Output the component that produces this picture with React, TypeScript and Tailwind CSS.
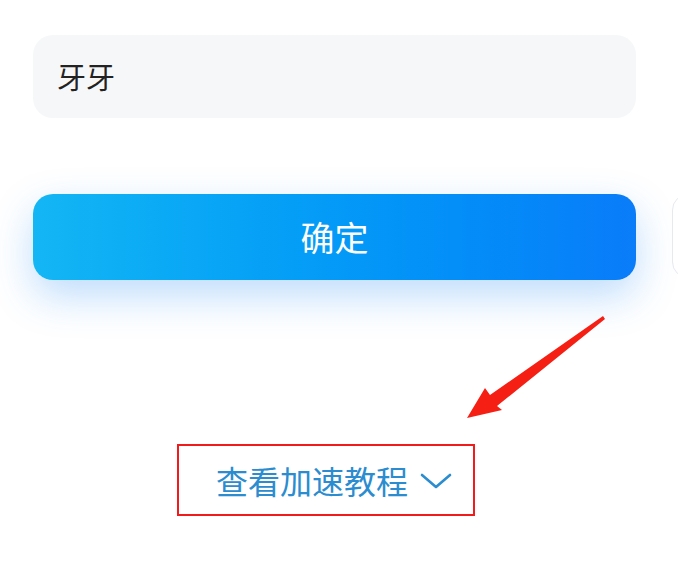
const cjk = { fontFamily: '"Noto Sans CJK SC", "Noto Sans", sans-serif' };

export default function App() {
  return (
    <div className="relative w-[678px] h-[570px] overflow-hidden bg-white" style={cjk}>
      <div className="pt-[35px] pl-[33px]">
        {/* nickname field */}
        <div className="w-[603px] h-[83px] rounded-[20px] bg-[#f6f7f9] flex items-center pl-[24px]">
          <span className="text-[29px] text-[#222] leading-none">牙牙</span>
        </div>

        {/* confirm row, next card peeks in from the right */}
        <div className="flex mt-[76px]">
          <button className="w-[603px] h-[86px] shrink-0 rounded-[20px] bg-gradient-to-r from-[#14b6f4] to-[#0a7cf9] shadow-[0_16px_40px_rgba(40,140,245,0.3)] text-white text-[34px] leading-none">
            确定
          </button>
          <div className="ml-[36px] w-[200px] h-[84px] shrink-0 rounded-[16px] border border-[#e6e9ee] bg-white" />
        </div>

        {/* tutorial link */}
        <div className="flex mt-[164px] ml-[144px]">
          <div className="w-[298px] h-[72px] border-2 border-[#f21b1b] flex items-center pl-[37px]">
            <span className="text-[32px] leading-none text-[#2b8ccf]">查看加速教程</span>
            <svg className="ml-[12px] mt-[2px]" width="32" height="18" viewBox="0 0 32 18" fill="none">
              <path d="M2 3 L16 15 L30 3" stroke="#2b8ccf" strokeWidth="2.6" strokeLinecap="round" strokeLinejoin="round" />
            </svg>
          </div>
        </div>
      </div>

      {/* red annotation arrow */}
      <svg className="absolute left-0 top-0" width="678" height="570" viewBox="0 0 678 570">
        <polygon
          points="467,418 485,388 490,395 603,316 605,319 497,406 502,410"
          fill="#f51f14"
        />
      </svg>
    </div>
  );
}
